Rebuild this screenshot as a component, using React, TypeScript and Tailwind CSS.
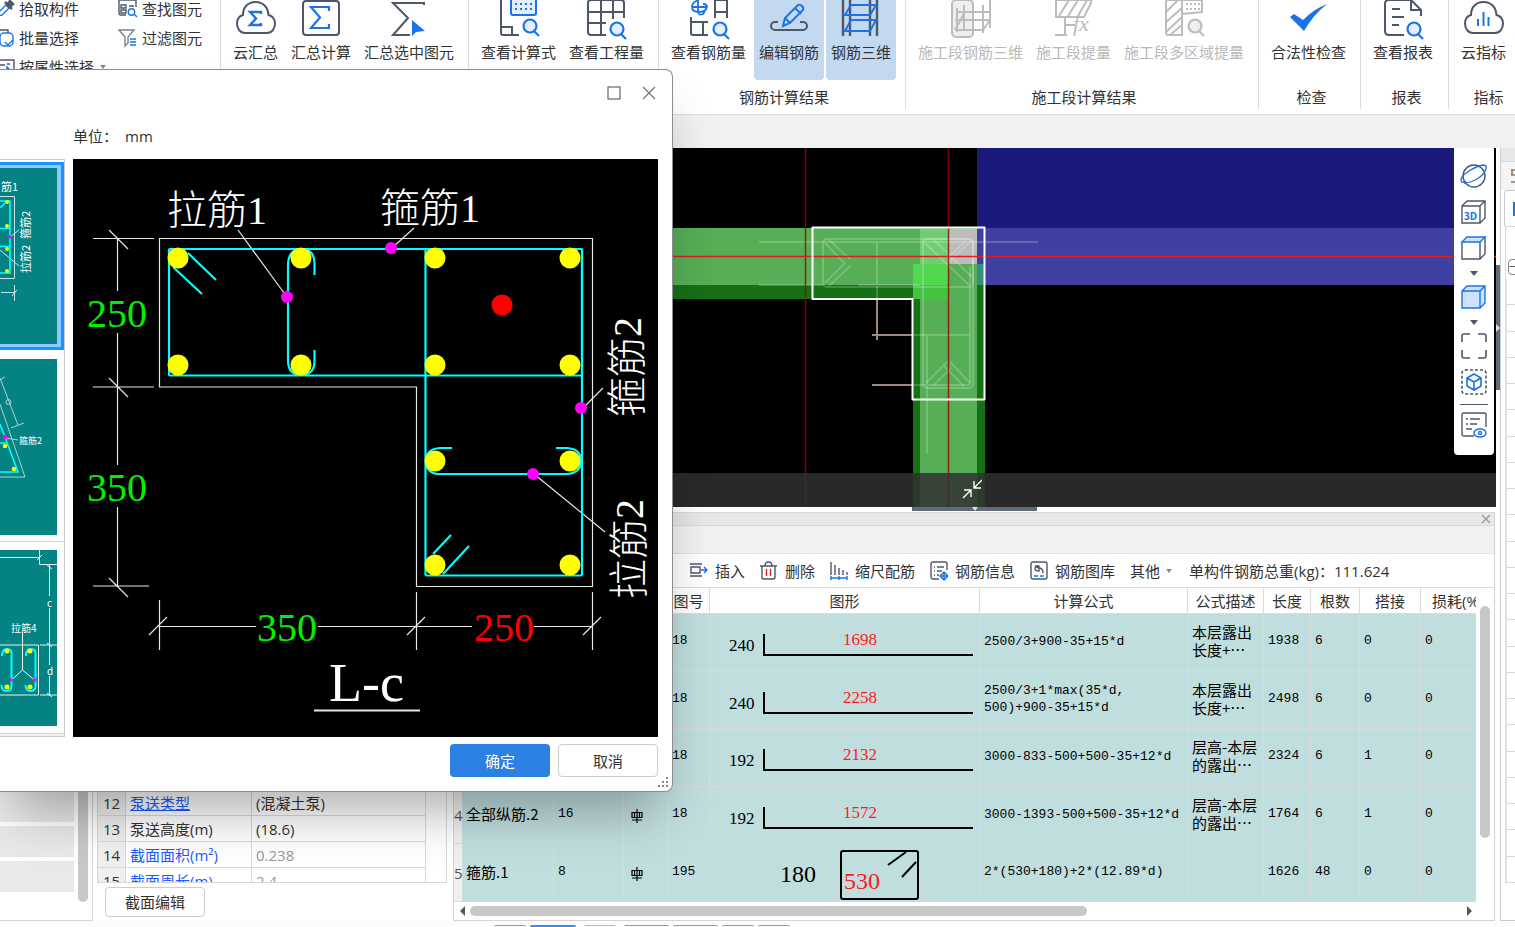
import { useState } from 'react';
import type { ReactNode } from 'react';

const DARK = "#4e5768";
const BLUE = "#1a73e8";
const GREY = "#bdbdbd";

// All big ribbon icons share one drawing plane, cx picks the icon's centre on it
function BigIcon({ cx, color = DARK, children }: { cx: number; color?: string; children: ReactNode }) {
    return (
        <svg width="44" height="40" viewBox={`${cx - 22} 0 44 40`} fill="none" stroke={color} strokeWidth="2" aria-hidden="true">
            {children}
        </svg>
    );
}

function Magnifier({ x, y, color = BLUE, fill = "#e3efff" }: { x: number; y: number; color?: string; fill?: string }) {
    return (
        <g stroke={color} strokeWidth="2.2">
            <path d={`M${x + 4} ${y + 5}l5 5`} />
            <circle cx={x} cy={y} r="6.5" fill={fill} />
        </g>
    );
}

function RibbonButton({ icon, label, active, disabled }: { icon: ReactNode; label: string; active?: boolean; disabled?: boolean }) {
    const look = active ? "w-[70px] bg-[#c2d9f0] rounded-b" : "";
    const ink = disabled ? "text-[#b9b9b9]" : "text-[#333]";
    return (
        <button disabled={disabled} className={`flex h-20 shrink-0 flex-col items-center whitespace-nowrap ${look} ${ink}`}>
            {icon}
            <span className="leading-6">{label}</span>
        </button>
    );
}

function RibbonGroup({ title, className, children }: { title?: string; className: string; children: ReactNode }) {
    return (
        <div className={`flex h-[109px] shrink-0 flex-col border-r border-[#dcdcdc] pl-3 ${className}`}>
            <div className="flex h-[88px]">{children}</div>
            <div className="pr-2 text-center leading-6">{title}</div>
        </div>
    );
}

function SmallTool({ icon, label, caret }: { icon: ReactNode; label: string; caret?: boolean }) {
    return (
        <button className="flex h-[29px] items-center gap-1 whitespace-nowrap">
            <svg width="20" height="20" viewBox="0 0 20 20" fill="none" stroke={DARK} strokeWidth="1.4" aria-hidden="true">{icon}</svg>
            <span>{label}</span>
            {caret && <Caret />}
        </button>
    );
}

function Caret({ dark }: { dark?: boolean }) {
    return (
        <svg width="10" height="6" viewBox="0 0 10 6" className="shrink-0" aria-hidden="true">
            <path d={dark ? "M1 1h8L5 6z" : "M2 1h6L5 5z"} fill={dark ? DARK : "#888"} />
        </svg>
    );
}

function Cloud({ x }: { x: number }) {
    return <path transform={`translate(${x} 0)`} d="M9 33C4 33 1 28.500 1 23.500C1 19 3.500 16 7 15C7 7 12 2 19.500 2S32 7 32.500 15C36 16 39 19 39 23.500C39 28.500 36 33 31 33Z" />;
}

function Ribbon() {
    return (
        <div className="flex h-[115px] shrink-0 overflow-hidden border-b border-[#d9d9d9] bg-white">
            <div className="flex h-[109px] w-[221px] shrink-0 border-r border-[#dcdcdc]">
                <div className="-mt-[6px] -ml-[5px] w-[123px]">
                    <SmallTool label="拾取构件" icon={<><path d="M3 17l1-4 7-7 3 3-7 7z" stroke={BLUE} /><path d="M10 3l7 7M12 6l3-4 3 3-4 3z" fill={DARK} strokeWidth="2.500" /></>} />
                    <SmallTool label="批量选择" icon={<><path d="M2 14V4q0-2 2-2h9v3" /><rect x="5" y="5" width="13" height="13" rx="4" stroke={BLUE} fill="white" /><path d="M10 14l3 3 5-5" stroke={BLUE} /></>} />
                    <SmallTool label="按属性选择" caret icon={<><path d="M2 3h17v9M2 8h8M2 13h7M12 7h3" /><path d="M12 10v8l5-3z" fill={BLUE} stroke={BLUE} /></>} />
                </div>
                <div className="-mt-[6px]">
                    <SmallTool label="查找图元" icon={<><path d="M1 1v13q0 2 2 2h5M1 4V1h17v7M3 6h5v3H3zM3 11h5v3H3zM11 7h5" /><circle cx="13.500" cy="13" r="3.200" stroke={BLUE} /><path d="M16 15l3 3" stroke={BLUE} /></>} />
                    <SmallTool label="过滤图元" icon={<><path d="M1 2h15l-6 7v6l-3 3V9z" stroke="#7b8290" /><path d="M12 11h6M12 14h6M12 17h6" stroke={BLUE} strokeWidth="1.600" /></>} />
                </div>
            </div>
            <RibbonGroup className="w-[248px] [&>div:first-child]:gap-[13px]">
                <RibbonButton label="云汇总" icon={<BigIcon cx={256}><Cloud x={236} /><path d="M261 14v-2h-11l6 6.500-6 6.500h11v-2" stroke={BLUE} strokeWidth="2.400" /></BigIcon>} />
                <RibbonButton label="汇总计算" icon={<BigIcon cx={320}><rect x="302" y="1" width="36" height="34" rx="3" /><path d="M328 11V7h-18l9 10.500L310 28h18v-4" stroke={BLUE} strokeWidth="2.200" /></BigIcon>} />
                <RibbonButton label="汇总选中图元" icon={<BigIcon cx={408}><path d="M423 5V3h-31l15 15-15 17h17" /><path d="M411 20v16l4-4 9-1z" fill={BLUE} stroke="none" /></BigIcon>} />
            </RibbonGroup>
            <RibbonGroup className="w-[190px] [&>div:first-child]:gap-[13px]">
                <RibbonButton label="查看计算式" icon={<BigIcon cx={518}><path d="M500 0v33q0 2 2 2h16M501 27h10v8" /><rect x="510" y="-4" width="25" height="19" rx="2" stroke={BLUE} fill="#e3efff" /><path d="M514 4h18M514 9h18" stroke={BLUE} strokeDasharray="2 3" /><Magnifier x={529} y={26} /></BigIcon>} />
                <RibbonButton label="查看工程量" icon={<BigIcon cx={606}><path d="M605 35h-15q-3 0-3-3V3q0-3 3-3h30q3 0 3 3v15M600 0v35M612 0v19M587 12h36M587 23h18" /><Magnifier x={616} y={29} /></BigIcon>} />
            </RibbonGroup>
            <RibbonGroup title="钢筋计算结果" className="w-[247px] [&>div:first-child]:gap-0.5">
                <div className="pr-1.5"><RibbonButton label="查看钢筋量" icon={<BigIcon cx={707}><path d="M689 17v16q0 2 2 2h15M689 22h17M701 22v13M713 18V0h12v18M713 12h12" /><path d="M697 0q-7 2-7 7t7 5 8-5q0-3-4-3M696 0v12q1 4 5 2l2-3M690 7h15" stroke={BLUE} strokeWidth="1.800" /><Magnifier x={718} y={29} /></BigIcon>} /></div>
                <RibbonButton active label="编辑钢筋" icon={<BigIcon cx={788}><path d="M777 22h-3a4 4 0 0 0 0 8h28a4 4 0 0 0 0-8h-3" /><path d="M782 26l2-8 13-13q2-1 4 1t1 4l-13 13zM794 8l6 6M784 18l5 5" stroke={BLUE} /></BigIcon>} />
                <RibbonButton active label="钢筋三维" icon={<BigIcon cx={861}><path d="M843 0v36M850 0v36M870 0v36M877 0v36" strokeWidth="2.400" /><path d="M851 5h25l-6 10h-25zM851 20h25l-6 11h-25z" stroke={BLUE} /></BigIcon>} />
            </RibbonGroup>
            <RibbonGroup title="施工段计算结果" className="w-[353px] [&>div:first-child]:gap-[13px]">
                <RibbonButton disabled label="施工段钢筋三维" icon={<BigIcon cx={971} color={GREY}><rect x="952" y="0" width="21" height="37" rx="4" fill="#eee" /><path d="M957 8v24M964 5v26M983 5v28M990 0v28M955 30l10-18h25M955 20h35M955 30h28l7-10M965 12h-8" /></BigIcon>} />
                <RibbonButton disabled label="施工段提量" icon={<BigIcon cx={1073} color={GREY}><path d="M1055 0v17h28l7-14V0zM1058 16l10-16M1067 16l10-16M1077 16l9-16M1064 17v18M1054 35h12M1064 25h10" /><text x="1072" y="31" fontSize="22" fontFamily="Liberation Serif, serif" fontStyle="italic" fill={GREY} stroke="none">fx</text></BigIcon>} />
                <RibbonButton disabled label="施工段多区域提量" icon={<BigIcon cx={1183} color={GREY}><path d="M1181 0v35h-14q-2 0-2-2V2q0-2 2-2h34v12l-20 2M1165 12l12-12M1165 22l16-14M1165 32l16-15M1169 35l12-10" /><path d="M1185 4h14M1185 9h14" strokeDasharray="2 2" /><Magnifier x={1194} y={26} color={GREY} fill="#eee" /></BigIcon>} />
            </RibbonGroup>
            <RibbonGroup title="检查" className="w-[102px]">
                <RibbonButton label="合法性检查" icon={<BigIcon cx={1308}><path d="M1289 17l4-3 9 6q11-11 24-16-14 11-23 27z" fill={BLUE} stroke="none" /></BigIcon>} />
            </RibbonGroup>
            <RibbonGroup title="报表" className="w-[88px]">
                <RibbonButton label="查看报表" icon={<BigIcon cx={1403}><path d="M1404 35h-15q-4 0-4-4V4q0-4 4-4h22l10 10v6M1411 0v10h10M1392 9h8M1392 17h12M1392 25h7" /><Magnifier x={1414} y={29} /></BigIcon>} />
            </RibbonGroup>
            <RibbonGroup title="指标" className="w-[76px]">
                <RibbonButton label="云指标" icon={<BigIcon cx={1484}><Cloud x={1464} /><path d="M1478 26v-7M1483.500 26V12M1488.500 26v-9" stroke={BLUE} /></BigIcon>} />
            </RibbonGroup>
        </div>
    );
}

function ModelView() {
    return (
        <svg width="1496" height="359" viewBox="0 148 1496 359" fill="none" className="shrink-0" aria-hidden="true">
            <rect x="977" y="148" width="517" height="80" fill="#1a1a7c" />
            <rect x="977" y="228" width="517" height="57" fill="#4040a2" />
            <rect x="600" y="228" width="377" height="57" fill="#56ae56" />
            <rect x="600" y="285" width="320" height="14" fill="#167016" />
            <rect x="913" y="285" width="72" height="222" fill="#167016" />
            <rect x="920" y="264" width="57" height="243" fill="#56ae56" />
            <rect x="920" y="229" width="29" height="35" fill="#72cc74" />
            <rect x="949" y="229" width="28" height="35" fill="#bdbcbd" />
            <rect x="913" y="264" width="36" height="35" fill="#42c442" />
            <rect x="913" y="264" width="36" height="21" fill="#50d850" />
            <rect x="977" y="264" width="7" height="21" fill="#348f80" />
            <path d="M877 299v41M872 335h41M872 385h41" stroke="#9c8880" strokeWidth="2" />
            <g stroke="white" strokeOpacity="0.2" strokeWidth="2">
                <path d="M759 242h279M759 285h64M858 285h62M877 243v56M913 335h56M913 385h57M927 336v117M970 266v119" />
                <rect x="823" y="239" width="150" height="48" rx="4" />
                <rect x="923" y="239" width="50" height="149" rx="4" />
                <path d="M825 243l20 21M829 240l21 19M825 283l20-20M829 286l21-20M925 243l44 42M934 240l38 37M971 241l-22 21M966 240l-17 17M926 383l21-21M933 386l18-18M970 383l-20-21M964 386l-20-20" />
            </g>
            <path d="M805.500 148v359M948.500 148v359" stroke="#a00000" strokeOpacity="0.8" strokeWidth="1.500" />
            <path d="M600 256.500h896" stroke="#e01c1c" strokeWidth="1.500" />
            <path d="M812.500 227.500h172v172h-72v-100.500h-100z" stroke="white" strokeWidth="2" strokeLinejoin="round" />
        </svg>
    );
}

function ViewTools() {
    const tool = "flex h-9 w-full items-center justify-center";
    return (
        <div className="absolute top-0 right-[2px] flex h-[307px] w-10 flex-col items-center rounded-b bg-white pt-[10px]">
            <button aria-label="动态观察" className={tool}>
                <svg width="28" height="26" viewBox="0 0 28 26" fill="none" stroke={DARK} strokeWidth="1.400"><circle cx="14" cy="13" r="11" /><path d="M6 18Q1 21 1 17q0-4 8-9T23 2q4 0 3 4-2 6-9 10T4 20" stroke={BLUE} /></svg>
            </button>
            <button aria-label="三维" className={tool}>
                <svg width="28" height="26" viewBox="0 0 28 26" fill="none" stroke={DARK} strokeWidth="1.400"><path d="M2 7l5-5h18v17l-5 5H2zM2 7h18v17M20 7l5-5" /><text x="4" y="21" fontSize="10" fontWeight="bold" fontFamily="Open Sans, sans-serif" fill={BLUE} stroke="none">3D</text></svg>
            </button>
            <button aria-label="俯视" className={tool}>
                <svg width="28" height="26" viewBox="0 0 28 26" fill="none" stroke={DARK} strokeWidth="1.400"><path d="M2 7v17h18l5-5V2M20 7v17" /><path d="M2 7l5-5h18l-5 5z" stroke={BLUE} fill="#cfe2fb" /></svg>
            </button>
            <span className="flex h-[13px] items-center"><Caret dark /></span>
            <button aria-label="实体" className={tool}>
                <svg width="28" height="26" viewBox="0 0 28 26" fill="#cfe2fb" stroke={BLUE} strokeWidth="1.400"><path d="M2 7l5-5h18v17l-5 5H2zM2 7h18v17M20 7l5-5" /></svg>
            </button>
            <span className="flex h-[13px] items-center"><Caret dark /></span>
            <button aria-label="全屏" className={tool}>
                <svg width="28" height="26" viewBox="0 0 28 26" fill="none" stroke={DARK} strokeWidth="1.600"><path d="M2 9V3q0-2 2-2h6M18 1h6q2 0 2 2v6M26 17v6q0 2-2 2h-6M10 25H4q-2 0-2-2v-6" /></svg>
            </button>
            <button aria-label="局部三维" className={tool}>
                <svg width="28" height="26" viewBox="0 0 28 26" fill="none" stroke={DARK} strokeWidth="1.600"><rect x="2" y="1" width="24" height="24" rx="3" strokeDasharray="3 2" /><path d="M14 5l7 4v8l-7 4-7-4V9zM7 9l7 4 7-4M14 13v8" stroke={BLUE} /></svg>
            </button>
            <div className="mt-1 h-px w-7 bg-[#4e5768]" />
            <button aria-label="显示设置" className="mt-0.5 flex h-9 w-full items-center justify-center">
                <svg width="28" height="26" viewBox="0 0 28 26" fill="none" stroke={DARK} strokeWidth="1.400"><path d="M14 24H4q-2 0-2-2V3q0-2 2-2h20q2 0 2 2v12M6 7h2M10 7h10M6 12h2M10 12h7M6 17h6" /><ellipse cx="20" cy="21" rx="6" ry="4" stroke={BLUE} /><circle cx="20" cy="21" r="1.500" stroke={BLUE} /></svg>
            </button>
        </div>
    );
}

function Tool({ label, children }: { label: string; children: ReactNode }) {
    return (
        <button className="flex items-center gap-[7px]">
            <svg width="18" height="20" viewBox="0 0 18 20" fill="none" stroke={DARK} strokeWidth="1.400" aria-hidden="true">{children}</svg>
            {label}
        </button>
    );
}

const rows = [
    { no: "", name: "", dia: "", shape: "18", side: "240", len: "1698", formula: ["2500/3+900-35+15*d"], desc: ["本层露出", "长度+…"], total: "1938", count: "6", lap: "0" },
    { no: "", name: "", dia: "", shape: "18", side: "240", len: "2258", formula: ["2500/3+1*max(35*d,", "500)+900-35+15*d"], desc: ["本层露出", "长度+…"], total: "2498", count: "6", lap: "0" },
    { no: "", name: "", dia: "", shape: "18", side: "192", len: "2132", formula: ["3000-833-500+500-35+12*d"], desc: ["层高-本层", "的露出…"], total: "2324", count: "6", lap: "1" },
    { no: "4", name: "全部纵筋.2", dia: "16", shape: "18", side: "192", len: "1572", formula: ["3000-1393-500+500-35+12*d"], desc: ["层高-本层", "的露出…"], total: "1764", count: "6", lap: "1" },
    { no: "5", name: "箍筋.1", dia: "8", shape: "195", side: "180", len: "530", formula: ["2*(530+180)+2*(12.89*d)"], desc: [], total: "1626", count: "48", lap: "0" },
];

function ShapeDrawing({ side, len }: { side: string; len: string }) {
    if (len === "530") {
        return (
            <svg width="269" height="56" viewBox="710 845 269 56" fontSize="24" fontFamily="Liberation Serif, serif" className="block">
                <text x="780" y="882">{side}</text>
                <rect x="841" y="851" width="77" height="48" rx="2" fill="none" stroke="black" strokeWidth="2" />
                <path d="M888 865l18-13M902 877l14-15" stroke="black" strokeWidth="2" />
                <text x="844" y="889" fill="#ff1a1a">{len}</text>
            </svg>
        );
    }
    return (
        <svg width="269" height="56" viewBox="710 614 269 56" fontSize="17" fontFamily="Liberation Serif, serif" className="block">
            <text x="729" y="651">{side}</text>
            <path d="M764 634v21h209" fill="none" stroke="black" strokeWidth="2" />
            <text x="843" y="645" fill="#ff1a1a">{len}</text>
        </svg>
    );
}

function RebarTable() {
    const th = "border-r border-b border-[#dcdcdc] p-0 font-normal whitespace-nowrap overflow-hidden";
    const td = "border-r border-b border-[#d6dcdc] p-0 pb-0.5 pl-1";
    return (
        <table className="h-[314px] w-[1022px] table-fixed border-separate border-spacing-0">
            <colgroup>
                <col className="w-2" /><col className="w-[92px]" /><col className="w-[70px]" /><col className="w-[44px]" />
                <col className="w-[42px]" /><col className="w-[270px]" /><col className="w-[208px]" /><col className="w-[76px]" />
                <col className="w-[47px]" /><col className="w-[49px]" /><col className="w-[61px]" /><col className="w-[55px]" />
            </colgroup>
            <thead>
                <tr className="h-[26px] bg-white">
                    <th className={th} /><th className={th} /><th className={th} /><th className={th} />
                    <th className={th}>图号</th>
                    <th className={th}>图形</th>
                    <th className={th}>计算公式</th>
                    <th className={th}>公式描述</th>
                    <th className={th}>长度</th>
                    <th className={th}>根数</th>
                    <th className={th}>搭接</th>
                    <th className="overflow-hidden border-b border-[#dcdcdc] p-0 pl-[11px] text-left font-normal whitespace-nowrap">损耗(%)</th>
                </tr>
            </thead>
            <tbody className="bg-[#c1dedf] font-['Liberation_Mono','Noto_Sans_CJK_SC',monospace] text-[13px] text-black">
                {rows.map((r, i) => (
                    <tr key={i}>
                        <td className="border-b border-[#d6dcdc] bg-[#f0f0f0] p-0 font-['Open_Sans',sans-serif] text-[15px] text-[#555]">{r.no}</td>
                        <td className="border-r border-b border-[#d6dcdc] p-0 pb-0.5 pl-1 font-['Noto_Sans_CJK_SC',sans-serif] text-[15px]">{r.name}</td>
                        <td className={td}>{r.dia}</td>
                        <td className={td}>
                            <svg width="14" height="14" viewBox="0 0 14 14" fill="none" stroke="black" strokeWidth="1.200" className="mt-1 ml-0.5" role="img" aria-label="HRB400">
                                <path d="M7 0v14M2 3.500h10v5H2zM2 11h10M4.500 3.500v5M9.500 3.500v5" />
                            </svg>
                        </td>
                        <td className={td}>{r.shape}</td>
                        <td className="border-r border-b border-[#d6dcdc] p-0"><ShapeDrawing side={r.side} len={r.len} /></td>
                        <td className={td}>{r.formula.map((line) => <div key={line} className="leading-[17px] whitespace-nowrap">{line}</div>)}</td>
                        <td className={td}>{r.desc.map((line) => <div key={line} className="font-['Noto_Sans_CJK_SC',sans-serif] text-[15px] leading-[18px] whitespace-nowrap">{line}</div>)}</td>
                        <td className={td}>{r.total}</td>
                        <td className={td}>{r.count}</td>
                        <td className={td}>{r.lap}</td>
                        <td className="border-b border-[#d6dcdc] p-0 pb-0.5 pl-1">0</td>
                    </tr>
                ))}
            </tbody>
        </table>
    );
}

function RebarPanel() {
    return (
        <div className="flex min-w-0 flex-1 flex-col overflow-hidden border-r border-b border-l border-[#d4d4d4] bg-white">
            <div className="flex h-[14px] shrink-0 items-center justify-end border-t border-b border-[#dadada] bg-[#e7e7e7] pr-[3px]">
                <button aria-label="关闭" className="leading-none">
                    <svg width="10" height="10" viewBox="0 0 10 10" stroke="#999" strokeWidth="1.300"><path d="M1 1l8 8M9 1L1 9" /></svg>
                </button>
            </div>
            <div className="h-7 shrink-0 border-b border-[#e2e2e2] bg-[#f1f1f1]" />
            <div className="flex h-[34px] shrink-0 items-center gap-[15px] border-b border-[#dcdcdc] pl-[236px] whitespace-nowrap">
                <Tool label="插入"><path d="M0 3h12M0 15h12M1 6h9v6H1z" /><path d="M11 9h6M14 6l3 3-3 3" stroke={BLUE} /></Tool>
                <Tool label="删除"><path d="M0 5h17M5 5q0-4 3.500-4T12 5M2 5v11q0 2 2 2h9q2 0 2-2V5" /><path d="M6.500 8v7M10.500 8v7" stroke="#e02020" /></Tool>
                <Tool label="缩尺配筋"><path d="M1 1v13M5 4v10M9 7v7M13 9v5M17 11v3" /><path d="M1 17h16M1 15v4M9 15v4M17 15v4" stroke={BLUE} /></Tool>
                <Tool label="钢筋信息"><path d="M9 18H3q-2 0-2-2V3q0-2 2-2h12q2 0 2 2v6M4 6h1M7 6h7M4 10h1M7 10h5M4 14h1M7 14h2" /><path d="M14 11v8M10 15h8M14 11l4 4-4 4-4-4z" stroke={BLUE} /></Tool>
                <Tool label="钢筋图库"><rect x="1" y="1" width="16" height="17" rx="2" /><path d="M5 5h4v5q-4 0-4-2.500T9 7q4 0 4 5" /><path d="M4 15h4M10 15h4" stroke={BLUE} /></Tool>
                <button className="flex items-center gap-1">其他<Caret /></button>
                <span>单构件钢筋总重(kg)：111.624</span>
            </div>
            <div className="flex">
                <RebarTable />
                <div className="flex-1 pt-[18px] pl-1">
                    <div className="h-[232px] w-[10px] rounded-full bg-[#c8c8c8]" />
                </div>
            </div>
            <div className="flex flex-1 items-center gap-1 pl-1">
                <svg width="8" height="10" viewBox="0 0 8 10"><path d="M7 0v10L2 5z" fill={DARK} /></svg>
                <div className="mr-auto h-[10px] w-[617px] rounded-full bg-[#c8c8c8]" />
                <svg width="8" height="10" viewBox="0 0 8 10" className="mr-5"><path d="M1 0v10l5-5z" fill={DARK} /></svg>
            </div>
        </div>
    );
}

const props = [
    { no: 12, name: "泵送类型", value: "(混凝土泵)", link: true, underline: true },
    { no: 13, name: "泵送高度(m)", value: "(18.6)" },
    { no: 14, name: "截面面积(m²)", value: "0.238", link: true, readOnly: true },
    { no: 15, name: "截面周长(m)", value: "2.4", link: true, readOnly: true },
];

function PropertyPanels() {
    return (
        <div className="flex w-[453px] shrink-0">
            <div className="flex w-[93px] shrink-0 border-r border-b border-[#d4d4d4] bg-white">
                <div className="flex flex-1 flex-col justify-end gap-1 pb-7">
                    <div className="h-[31px] bg-[#e9e9e9]" />
                    <div className="h-[31px] bg-[#e9e9e9]" />
                    <div className="h-[31px] bg-[#e9e9e9]" />
                </div>
                <div className="mx-1 mb-[18px] w-[10px] rounded-b-full bg-[#c8c8c8]" />
            </div>
            <div className="flex-1 bg-white pt-[277px] pr-[6px] pl-1">
                <div className="h-[94px] overflow-hidden border border-[#d8d8d8]">
                    <table className="w-[328px] table-fixed border-separate border-spacing-0">
                        <colgroup><col className="w-7" /><col className="w-[126px]" /><col /></colgroup>
                        <tbody>
                            {props.map((p) => (
                                <tr key={p.no} className="h-[26px]">
                                    <td className="border-r border-b border-[#d8d8d8] bg-[#f0f0f0] p-0 text-center">{p.no}</td>
                                    <td className={`border-r border-b border-[#d8d8d8] p-0 pl-1 ${p.link ? "text-[#1a5cff]" : ""} ${p.underline ? "underline" : ""}`}>{p.name}</td>
                                    <td className={`border-r border-b border-[#d8d8d8] p-0 pl-1 ${p.readOnly ? "text-[#999]" : ""}`}>{p.value}</td>
                                </tr>
                            ))}
                        </tbody>
                    </table>
                </div>
                <button className="mt-1 ml-2 h-[30px] w-[100px] rounded border border-[#ccc] bg-white">截面编辑</button>
            </div>
        </div>
    );
}

function RightPanel() {
    return (
        <div className="flex w-[15px] shrink-0 flex-col overflow-hidden border-b border-l border-[#c9ccd0] bg-white">
            <div className="h-[14px] shrink-0 border-b border-[#dadada] bg-[#e7e7e7]" />
            <div className="flex h-[28px] shrink-0 items-center justify-end bg-[#f4f4f4]">
                <svg width="4" height="16" viewBox="0 0 4 16" stroke="#8a7a66" strokeWidth="1.500"><path d="M0 2h4M0 7h4M0 14h4M1 2v5" /></svg>
            </div>
            <div className="ml-[3px] flex h-[36px] shrink-0 items-center justify-end rounded-tl border-t border-l border-[#ccc]">
                <span className="h-[14px] w-[2px] bg-[#1a73e8]" />
            </div>
            <div className="ml-1 flex h-[53px] shrink-0 flex-col justify-end border-t border-l border-[#d8d8d8]">
                <button aria-label="收起" className="mb-1 ml-[2px] h-4 w-4 rounded-sm border border-[#888] text-left text-xs leading-3">−</button>
            </div>
            <div className="ml-1 grid h-[604px] shrink-0 auto-rows-fr border-l-2 border-[#e0e0e0]">
                {Array.from({ length: 23 }, (_, i) => <div key={i} className="border-b border-[#d8d8d8]" />)}
            </div>
        </div>
    );
}

// Reinforcement section drawing, in window coordinates
function SectionDrawing() {
    const bars = [[178, 258], [301, 258], [435, 258], [570, 258], [178, 365], [301, 365], [435, 365], [570, 365], [435, 461], [570, 461], [435, 565], [570, 565]];
    const marks = [[287, 297], [391, 248], [581, 408], [533, 474]];
    return (
        <svg width="585" height="578" viewBox="73 159 585 578" fill="none" className="shrink-0 bg-black">
            <g stroke="#e6e6e6" strokeWidth="1.200">
                <path d="M159.500 238.500h433v348h-176v-199.500h-257z" />
                <path d="M93 238.500h61M93 387h61M93 586h56M117.500 238v53M117.500 333v132M117.500 507v79M109 230l19 19M109 378l19 19M109 578l19 19" />
                <path d="M159.500 600v50M416.500 592v58M592.500 592v58M159 626.500h97M318 626.500h154M534 626.500h58M149 635l18-18M407 635l18-18M583 635l18-18" />
                <path d="M238 230l49 67M414 228l-22 20M603 388l-20 20M605 532l-71-58" />
                <path d="M314 710.500h106" strokeWidth="2" />
            </g>
            <g stroke="#00ffff" strokeWidth="2.200">
                <rect x="169" y="249" width="413" height="126.500" rx="1" />
                <rect x="425.500" y="249" width="156.500" height="326.500" rx="1" />
                <path d="M314.500 275v-11q0-15-13-15t-13.500 16v95q0 15 13 15t13.500-13v-12" />
                <path d="M452 448h-12q-14 1-14 13t12 13h129q14-1 14-13t-14-13h-11" />
                <path d="M188 253l28 27M173 267l29 27M433 554l18-19M443 574l26-28" />
            </g>
            {bars.map(([x, y]) => <circle key={`${x}-${y}`} cx={x} cy={y} r="10.500" fill="#ffff00" />)}
            <circle cx="502" cy="305" r="10.500" fill="#ff0000" />
            {marks.map(([x, y]) => <circle key={`${x}-${y}`} cx={x} cy={y} r="6" fill="#ff00ff" />)}
            <g fontFamily="Liberation Serif, Noto Sans CJK SC, serif" fontSize="40" fontWeight="300" fill="white">
                <text x="167" y="224">拉筋1</text>
                <text x="380" y="222">箍筋1</text>
                <text transform="translate(641 417) rotate(-90)">箍筋2</text>
                <text transform="translate(643 599) rotate(-90)">拉筋2</text>
                <text x="329" y="701" fontSize="54">L-c</text>
                <g fill="#00f000">
                    <text x="87" y="327">250</text>
                    <text x="87" y="501">350</text>
                    <text x="257" y="641">350</text>
                </g>
                <text x="474" y="641" fill="red">250</text>
            </g>
        </svg>
    );
}

function Thumbs() {
    const label = { fontFamily: "Noto Sans CJK SC, sans-serif", fill: "white", stroke: "none" };
    return (
        <div className="flex w-[65px] shrink-0 flex-col border-t border-r border-b border-[#ccc] bg-white">
            <button aria-label="L-c" className="mt-[2px] h-[188px] border-t-[3px] border-r-[3px] border-b-[3px] border-[#1296ff] bg-[#94c6ff]">
                <svg width="57" height="176" viewBox="0 168 57 176" fill="none" stroke="#c8e4e4" className="bg-[#048284]">
                    <path d="M0 196.500h14.500v82H0M10 237l9-7M0 250l19 16M1 292.500h14M14.500 285v16M12 296l5-6" />
                    <path d="M0 201h10v72H0M0 228.500h10M0 246.500h10M0 208l5-5" stroke="#00ffff" strokeWidth="1.600" />
                    <g fill="#ffff00" stroke="none"><circle cx="7" cy="202" r="2" /><circle cx="7" cy="226" r="2" /><circle cx="7" cy="249" r="2" /><circle cx="7" cy="271" r="2" /></g>
                    <circle cx="10" cy="237" r="1.800" fill="#ff00ff" stroke="none" />
                    <g {...label} fontSize="11"><text x="1" y="191">筋1</text><text transform="translate(30 239) rotate(-90)">箍筋2</text><text transform="translate(30 273) rotate(-90)">拉筋2</text></g>
                </svg>
            </button>
            <button aria-label="2" className="mt-[9px] h-[176px]">
                <svg width="57" height="176" viewBox="0 359 57 176" fill="none" stroke="#a8d4d4" className="bg-[#048284]">
                    <path d="M0 378l18 47M0 380l5-3M11 428l13-5M0 404l25 73H0M5 438l13 2" />
                    <circle cx="8.500" cy="402" r="2.500" />
                    <path d="M0 424l18 48H0M0 443h6" stroke="#00ffff" strokeWidth="1.600" />
                    <circle cx="5" cy="446" r="2.300" fill="#ffff00" stroke="none" /><circle cx="14" cy="469" r="2.300" fill="#ffff00" stroke="none" />
                    <circle cx="5" cy="437" r="2.300" fill="#ff00ff" stroke="none" />
                    <text {...label} x="19" y="444" fontSize="9">箍筋2</text>
                </svg>
            </button>
            <div className="mt-[6px] h-px bg-[#d4d4d4]" />
            <button aria-label="3" className="mt-2 h-[176px]">
                <svg width="57" height="176" viewBox="0 550 57 176" fill="none" stroke="#e6f4f4" className="bg-[#048284]">
                    <path d="M0 557.500h40M39.500 550v14.500H57M37 560l5-5M49.500 565v31M49.500 608v57M49.500 676v20M40 645h17M40 695h17M47 565l5 4M47 643l5 4M47 693l5 4M0 645h38.500v50H0M22.500 632v38l-11 10M22.500 670l12 10" />
                    <path d="M2 656q0-7 5-7t4.500 5v32q0 5-5 5t-5-6M26 656q0-7 5-7t4.500 5v32q0 5-5 5t-5-6" stroke="#00ffff" strokeWidth="2" />
                    <g fill="#ffff00" stroke="none"><circle cx="7" cy="651" r="2.500" /><circle cx="30" cy="651" r="2.500" /><circle cx="7" cy="687" r="2.500" /><circle cx="30" cy="687" r="2.500" /></g>
                    <circle cx="11" cy="680" r="1.800" fill="#ff00ff" stroke="none" /><circle cx="35" cy="680" r="1.800" fill="#ff00ff" stroke="none" />
                    <g {...label} fontSize="10"><text x="11" y="632">拉筋4</text><text x="47" y="607">c</text><text x="47" y="675">d</text></g>
                </svg>
            </button>
            <div className="mt-auto h-[3px] border-t border-[#d4d4d4] bg-[#f0f0f0]" />
        </div>
    );
}

function SectionDialog({ onClose }: { onClose: () => void }) {
    return (
        <div role="dialog" aria-label="参数图" className="absolute top-[69px] left-0 flex w-[673px] flex-col rounded-r-lg border border-l-0 border-[#8d8d8d] bg-white shadow-[0_32px_50px_-14px_rgba(0,0,0,0.32)]">
            <div className="flex h-[46px] items-center justify-end gap-[21px] pr-4">
                <button aria-label="最大化"><svg width="14" height="14" viewBox="0 0 14 14" fill="none" stroke="#666" strokeWidth="1.200"><rect x="1" y="1" width="12" height="12" /></svg></button>
                <button aria-label="关闭" onClick={onClose}><svg width="14" height="14" viewBox="0 0 14 14" stroke="#777" strokeWidth="1.300"><path d="M1 1l12 12M13 1L1 13" /></svg></button>
            </div>
            <div className="mb-[3px] flex h-[40px] items-center gap-[7px] pl-[73px]">
                <span>单位：</span><span>mm</span>
            </div>
            <div className="flex h-[578px] gap-2">
                <Thumbs />
                <SectionDrawing />
            </div>
            <div className="flex h-[54px] justify-end gap-2 pt-[7px] pr-[14px]">
                <button onClick={onClose} className="h-[33px] w-[100px] rounded bg-[#2c80e2] text-white">确定</button>
                <button onClick={onClose} className="h-[33px] w-[100px] rounded border border-[#ccc] bg-white">取消</button>
            </div>
            <svg width="12" height="12" viewBox="0 0 12 12" fill="#888" className="absolute right-[3px] bottom-[3px]" aria-hidden="true">
                <path d="M9 1h2v2H9zM9 5h2v2H9zM9 9h2v2H9zM5 5h2v2H5zM5 9h2v2H5zM1 9h2v2H1z" />
            </svg>
        </div>
    );
}

export default function App() {
    const [dialogOpen, setDialogOpen] = useState(true);

    return (
        <div className="relative flex h-screen flex-col overflow-hidden bg-[#fcfcfc] font-['Open_Sans','Noto_Sans_CJK_SC',sans-serif] text-[15px] leading-5 text-[#333]">
            <Ribbon />
            <div className="h-[33px] shrink-0 bg-[#f1f1f1]" />
            <div className="flex min-h-0 flex-1">
                <div className="flex min-w-0 flex-1 flex-col">
                    <div className="relative flex min-h-0 flex-1 overflow-hidden bg-black">
                        <ModelView />
                        <div className="absolute inset-x-0 bottom-0 h-[34px] bg-[#303030]/85" />
                        <button aria-label="收缩" className="absolute bottom-2 left-[962px]">
                            <svg width="20" height="20" viewBox="0 0 20 20" fill="none" stroke="white" strokeWidth="1.400"><path d="M20 1l-8 8M12 2v7h7M1 19l8-8M2 11h7v7" /></svg>
                        </button>
                        <ViewTools />
                    </div>
                    <div className="h-[5px] shrink-0 bg-white">
                        <div className="ml-[912px] flex h-1 w-[125px] justify-center bg-[#5f6b78]">
                            <svg width="8" height="4" viewBox="0 0 8 4"><path d="M1 0h6L4 4z" fill="#ddd" /></svg>
                        </div>
                    </div>
                    <div className="flex h-[409px] shrink-0 pr-[1px]">
                        <PropertyPanels />
                        <RebarPanel />
                    </div>
                </div>
                <div className="w-1 shrink-0 bg-white pt-[117px]">
                    <div className="flex h-[125px] items-center bg-[#5f6b78]">
                        <svg width="4" height="8" viewBox="0 0 4 8"><path d="M0 0v8l4-4z" fill="#ddd" /></svg>
                    </div>
                </div>
                <RightPanel />
            </div>
            <div className="flex h-[6px] shrink-0 items-end gap-1 overflow-hidden pl-[494px]">
                <div className="h-[2px] w-8 rounded-t border-t border-[#999]" />
                <div className="mr-1 h-[2px] w-[46px] rounded-t bg-[#3d8af0]" />
                <div className="mr-1 h-[2px] w-8 rounded-t border-t border-[#bbb]" />
                <div className="h-[2px] w-[45px] rounded-t border-t border-[#999]" />
                <div className="h-[2px] w-[45px] rounded-t border-t border-[#999]" />
                <div className="h-[2px] w-8 rounded-t border-t border-[#999]" />
                <div className="h-[2px] w-8 rounded-t border-t border-[#999]" />
            </div>
            {dialogOpen && <SectionDialog onClose={() => setDialogOpen(false)} />}
        </div>
    );
}
